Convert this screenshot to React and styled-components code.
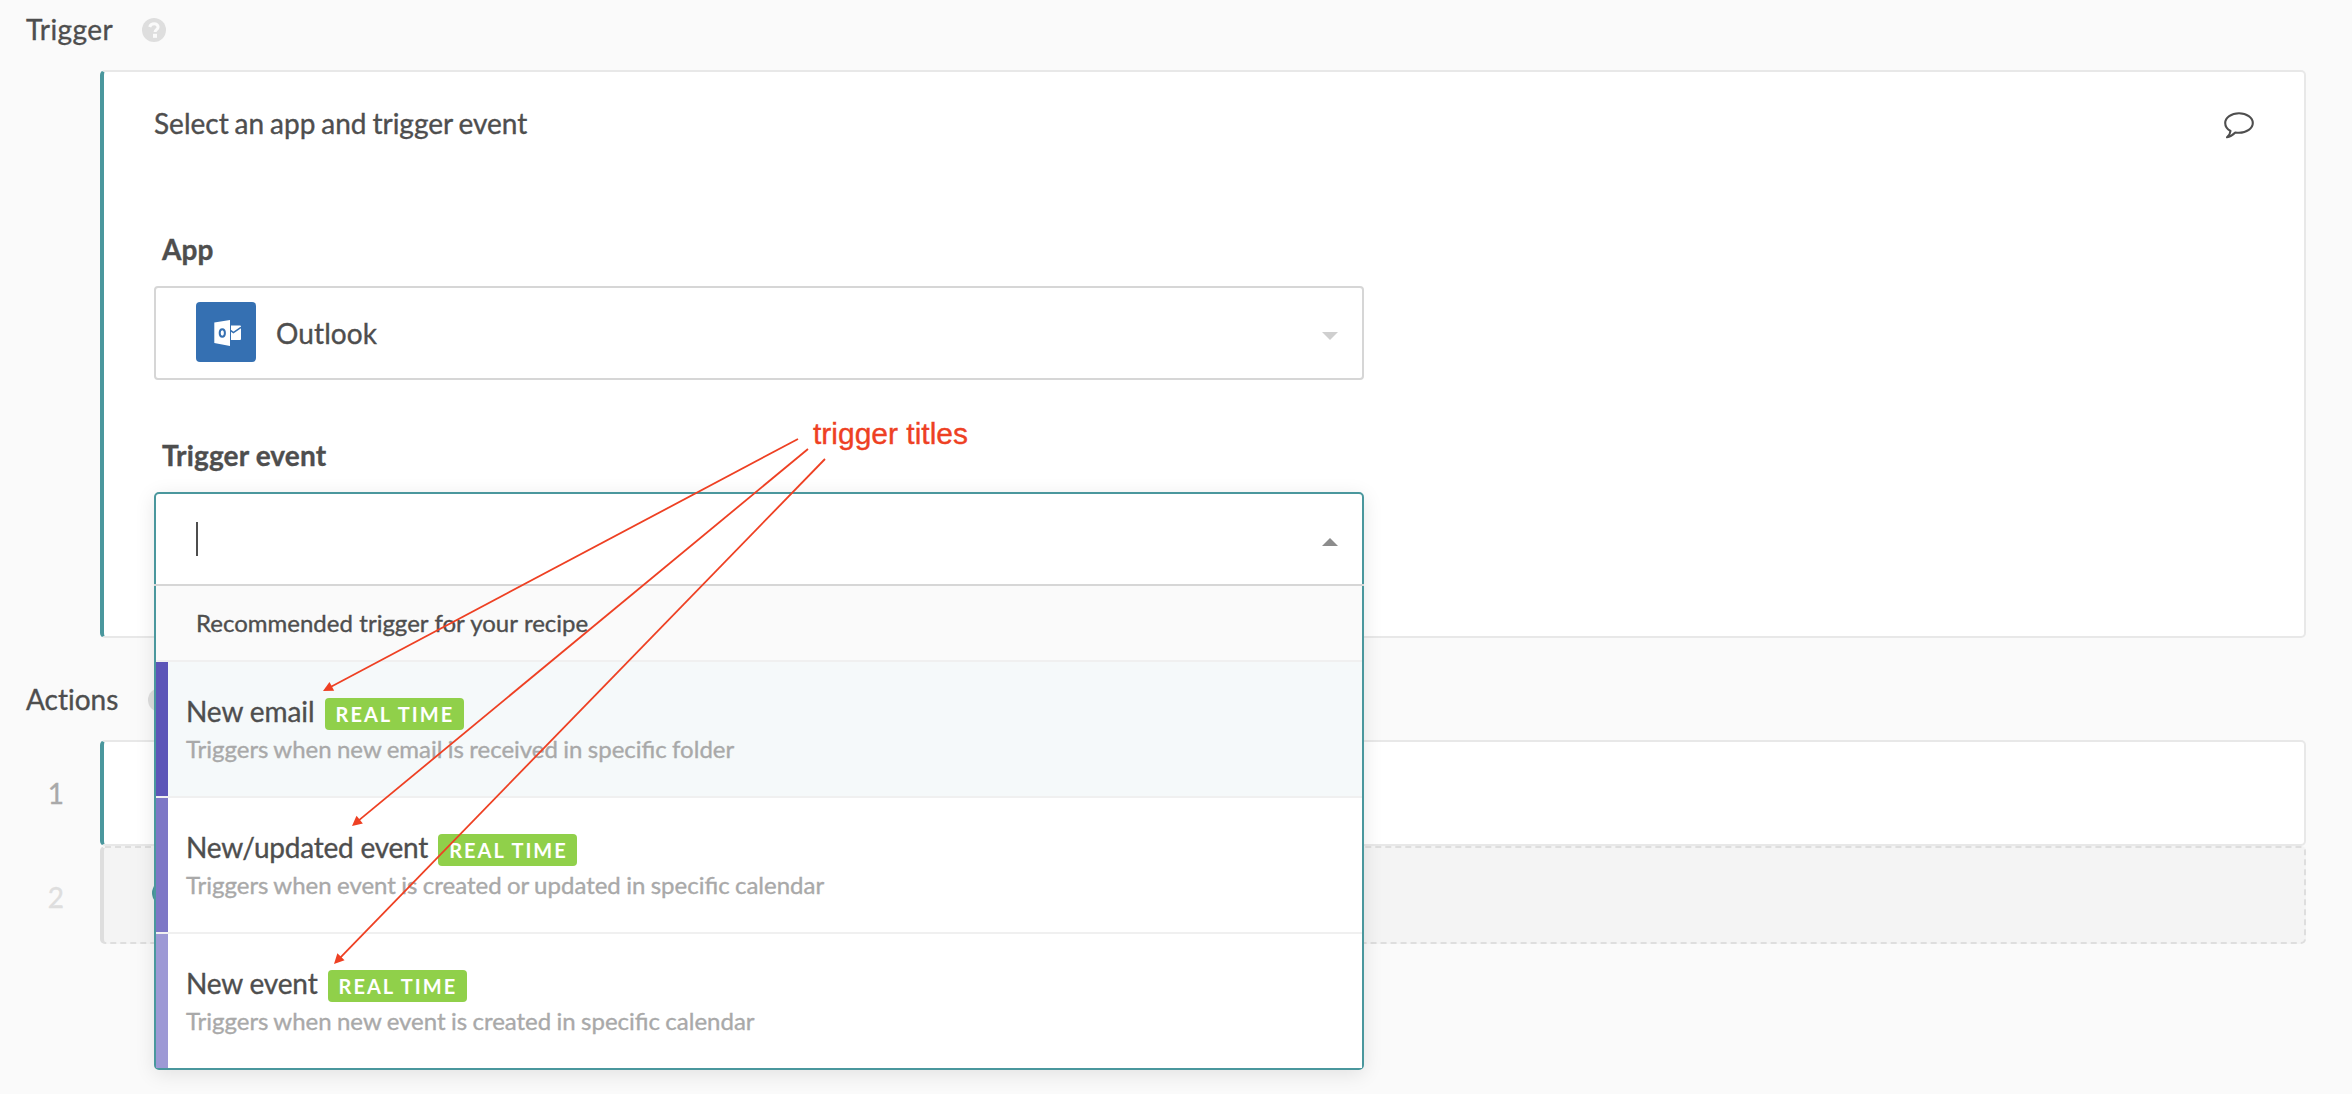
import React from "react";
import styled, { createGlobalStyle } from "styled-components";

const Global = createGlobalStyle`
  *, *::before, *::after { box-sizing: border-box; }
  body {
    margin: 0;
    background: #fafafa;
    color: #4e4e4e;
    font-family: Lato, "Open Sans", sans-serif;
    font-size: 28px;
    line-height: 40px;
    -webkit-text-stroke: 0.35px currentColor;
  }
`;

const Page = styled.main`
  position: relative;
  width: 2352px;
  height: 1094px;
  overflow: hidden;
`;

const SectionHeader = styled.header`
  display: flex;
  align-items: flex-start;
  gap: 26px;
  height: ${(p) => p.$height}px;
  padding: ${(p) => p.$top}px 0 0 26px;
`;

const SectionTitle = styled.h2`
  margin: 0;
  width: ${(p) => p.$width}px;
  font-size: 28px;
  font-weight: 400;
  letter-spacing: ${(p) => p.$tracking || 0}px;
  font-variant-ligatures: none;
  white-space: nowrap;
`;

const HelpSvg = styled.svg`
  width: 24px;
  height: 24px;
  margin-top: 9px;
`;

const Card = styled.section`
  margin: 0 46px 0 100px;
  height: 568px;
  background: #fff;
  border: 2px solid #e8e8e8;
  border-left: 4px solid #4a979d;
  border-radius: 5px;
  padding: 31px 50px 0 50px;
`;

const CardHead = styled.div`
  display: flex;
  justify-content: space-between;
  height: 126px;
`;

const CardTitle = styled.span`
  word-spacing: -1.25px;
`;

const CommentSvg = styled.svg`
  width: 30px;
  height: 27px;
  margin-top: 9px;
`;

const Field = styled.div`
  width: 1210px;
  height: 206px;
`;

const Label = styled.div`
  height: 57px;
  padding-left: 8px;
  font-weight: 700;
  letter-spacing: 0.15px;
`;

const SelectBox = styled.div`
  display: flex;
  align-items: center;
  height: 94px;
  padding: 0 24px 0 40px;
  background: #fff;
  border: 2px solid #d6d6d6;
  border-radius: 4px;
`;

const OutlookSvg = styled.svg`
  width: 60px;
  height: 60px;
  margin: -2px 20px 0 0;
`;

const Value = styled.span`
  flex: 1;
  letter-spacing: 0.1px;
`;

const Arrow = styled.svg`
  width: 16px;
  height: 8px;
  margin-top: 6px;
`;

const Dropdown = styled.div`
  position: relative;
  z-index: 2;
  height: 578px;
  border: 2px solid #4a979d;
  border-radius: 5px;
  background: #fff;
  box-shadow: 0 4px 20px rgba(0, 0, 0, 0.1);
`;

const SearchRow = styled.div`
  display: flex;
  align-items: center;
  justify-content: space-between;
  height: 92px;
  margin: 0 -2px;
  padding: 0 26px 0 42px;
  border-bottom: 2px solid #d6d6d6;
`;

const Caret = styled.span`
  width: 2px;
  height: 34px;
  background: #4e4e4e;
`;

const GroupTitle = styled.div`
  height: 76px;
  padding: 17px 0 0 40px;
  font-size: 24px;
  word-spacing: 0.3px;
  background: #fafafa;
  border-bottom: 2px solid #f0f0f0;
`;

const Option = styled.div`
  display: flex;
  height: ${(p) => (p.$last ? 134 : 136)}px;
  border-bottom: ${(p) => (p.$last ? 0 : 2)}px solid #f0f0f0;
  background: ${(p) => (p.$active ? "#f5f9fa" : "#fff")};
`;

const Strip = styled.span`
  width: 12px;
  background: ${(p) => p.$color};
`;

const OptionBody = styled.div`
  padding: 29px 0 0 18px;
`;

const OptionTitle = styled.div`
  display: flex;
  height: 41px;
  letter-spacing: ${(p) => p.$tracking}px;
`;

const Badge = styled.span`
  width: 139px;
  height: 32px;
  margin: 7px 0 0 10px;
  padding-left: 11px;
  border-radius: 4px;
  background: #90d04a;
  color: #fff;
  font-size: 20px;
  font-weight: 700;
  line-height: 33px;
  letter-spacing: 2px;
  white-space: nowrap;
  -webkit-text-stroke: 0;
`;

const OptionHint = styled.div`
  font-size: 24px;
  line-height: 34px;
  word-spacing: -0.8px;
  color: #a9a9a9;
`;

const StepRow = styled.div`
  display: flex;
  height: ${(p) => p.$height}px;
`;

const StepNumber = styled.span`
  display: flex;
  align-items: center;
  justify-content: flex-end;
  width: 100px;
  padding: ${(p) => (p.$muted ? 3 : 0)}px 36px 0 0;
  color: ${(p) => (p.$muted ? "#dedede" : "#a9a9a9")};
`;

const StepCard = styled.div`
  display: flex;
  align-items: center;
  width: 2206px;
  padding-left: 48px;
  background: ${(p) => (p.$empty ? "#f4f4f4" : "#fff")};
  border: 2px ${(p) => (p.$empty ? "dashed #dedede" : "solid #e8e8e8")};
  border-left: 4px solid ${(p) => (p.$empty ? "#dedede" : "#4a979d")};
  border-radius: 5px;
`;

const AddDot = styled.span`
  width: 24px;
  height: 24px;
  margin-bottom: 4px;
  border-radius: 50%;
  background: #4a979d;
`;

const Annotation = styled.div`
  position: absolute;
  z-index: 3;
  left: 813px;
  top: 414px;
  font-family: "Liberation Sans", Arial, sans-serif;
  font-size: 30px;
  color: #ee4023;
  white-space: nowrap;
`;

const Arrows = styled.svg`
  position: absolute;
  z-index: 3;
  left: 0;
  top: 0;
  pointer-events: none;
`;

function Help() {
  return (
    <HelpSvg viewBox="0 0 24 24">
      <circle cx="12" cy="12" r="12" fill="#dedede" />
      <path d="M7.700 8.900C8.400 6.900 10 5.700 12.100 5.700c2.300 0 4 1.300 4 3.200 0 2.600-3 2.700-3 5" fill="none" stroke="#fafafa" strokeWidth="3" />
      <rect x="11" y="15.8" width="4" height="4" fill="#fafafa" />
    </HelpSvg>
  );
}

function OutlookIcon() {
  return (
    <OutlookSvg viewBox="0 0 60 60">
      <rect width="60" height="60" rx="4" fill="#3570b2" />
      <path d="M18.300 20.500 34 18v26l-15.700-3z" fill="#fff" />
      <ellipse cx="26.3" cy="31" rx="2.6" ry="3.7" fill="none" stroke="#3570b2" strokeWidth="2" />
      <path d="M35 23.500h9a1 1 0 0 1 1 1V37a1 1 0 0 1-1 1h-9z" fill="#fff" />
      <path d="M34.800 28.600l2.600 2L45 25.300" fill="none" stroke="#3570b2" strokeWidth="1.6" />
    </OutlookSvg>
  );
}

const options = [
  { title: "New email", hint: "Triggers when new email is received in specific folder", color: "#5c55b8", tracking: -0.08 },
  { title: "New/updated event", hint: "Triggers when event is created or updated in specific calendar", color: "#7d77c6", tracking: -0.22 },
  { title: "New event", hint: "Triggers when new event is created in specific calendar", color: "#9d99d5", tracking: -0.16 },
];

const pointers = [
  { from: [798, 439], to: [323, 691] },
  { from: [808, 449], to: [352, 826] },
  { from: [825, 459], to: [334, 964] },
];

function Pointer({ from, to }) {
  const dx = to[0] - from[0];
  const dy = to[1] - from[1];
  const length = Math.hypot(dx, dy);
  const angle = (Math.atan2(dy, dx) * 180) / Math.PI;
  return (
    <g transform={`translate(${from[0]} ${from[1]}) rotate(${angle})`} fill="#ee4023">
      <rect x="0" y="-0.9" width={length - 8} height="1.8" />
      <path d={`M${length} 0l-10-5v10z`} />
    </g>
  );
}

export default function App() {
  return (
    <Page>
      <Global />
      <SectionHeader $height={70} $top={9}>
        <SectionTitle $width={90} $tracking={0.4}>Trigger</SectionTitle>
        <Help />
      </SectionHeader>
      <Card>
        <CardHead>
          <CardTitle>Select an app and trigger event</CardTitle>
          <CommentSvg viewBox="0 0 30 27">
            <path d="M15 1.200c7.700 0 13.800 4.400 13.800 9.800S22.700 20.800 15 20.800c-1.300 0-2.500-.1-3.700-.3-2.200 2.200-4.900 4.300-8.300 4.800 1.900-1.600 3.300-4 3.500-6.300C3.300 17.200 1.200 14.300 1.200 11 1.200 5.600 7.300 1.200 15 1.200z" fill="none" stroke="#4e4e4e" strokeWidth="2.1" strokeLinejoin="round" />
          </CommentSvg>
        </CardHead>
        <Field>
          <Label>App</Label>
          <SelectBox>
            <OutlookIcon />
            <Value>Outlook</Value>
            <Arrow viewBox="0 0 16 8"><path d="M0 0h16l-8 8z" fill="#cfcfcf" /></Arrow>
          </SelectBox>
        </Field>
        <Field>
          <Label>Trigger event</Label>
          <Dropdown>
            <SearchRow>
              <Caret />
              <Arrow viewBox="0 0 16 8"><path d="M0 8h16L8 0z" fill="#8c8c8c" /></Arrow>
            </SearchRow>
            <GroupTitle>Recommended trigger for your recipe</GroupTitle>
            {options.map((o, i) => (
              <Option key={o.title} $active={i === 0} $last={i === 2}>
                <Strip $color={o.color} />
                <OptionBody>
                  <OptionTitle $tracking={o.tracking}>
                    {o.title}
                    <Badge>REAL TIME</Badge>
                  </OptionTitle>
                  <OptionHint>{o.hint}</OptionHint>
                </OptionBody>
              </Option>
            ))}
          </Dropdown>
        </Field>
      </Card>
      <SectionHeader $height={102} $top={41}>
        <SectionTitle $width={96}>Actions</SectionTitle>
        <Help />
      </SectionHeader>
      <StepRow $height={106}>
        <StepNumber>1</StepNumber>
        <StepCard />
      </StepRow>
      <StepRow $height={98}>
        <StepNumber $muted>2</StepNumber>
        <StepCard $empty>
          <AddDot />
        </StepCard>
      </StepRow>
      <Arrows width="2352" height="1094" viewBox="0 0 2352 1094">
        {pointers.map((p) => <Pointer key={p.to[0]} {...p} />)}
      </Arrows>
      <Annotation>trigger titles</Annotation>
    </Page>
  );
}
